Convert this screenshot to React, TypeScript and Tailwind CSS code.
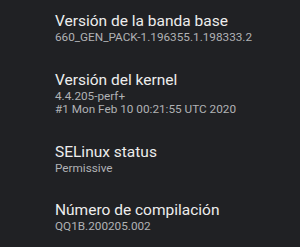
const items = [
  { title: "Versión de la banda base", lines: ["660_GEN_PACK-1.196355.1.198333.2"] },
  { title: "Versión del kernel", lines: ["4.4.205-perf+", "#1 Mon Feb 10 00:21:55 UTC 2020"] },
  { title: "SELinux status", lines: ["Permissive"] },
  { title: "Número de compilación", lines: ["QQ1B.200205.002"] },
];

export default function App() {
  return (
    <div className="w-[300px] h-[247px] overflow-hidden bg-[#202124] font-['Roboto',sans-serif]">
      <div className="flex flex-col pl-[55px] pt-[11px]">
        {items.map((item) => (
          <div key={item.title} className="pb-[25px]">
            <div className="text-[15.5px] leading-[20px] text-[#ededed]">{item.title}</div>
            {item.lines.map((line) => (
              <div key={line} className="text-[11.75px] leading-[13.5px] text-[#b0b2b5]">
                {line}
              </div>
            ))}
          </div>
        ))}
      </div>
    </div>
  );
}
